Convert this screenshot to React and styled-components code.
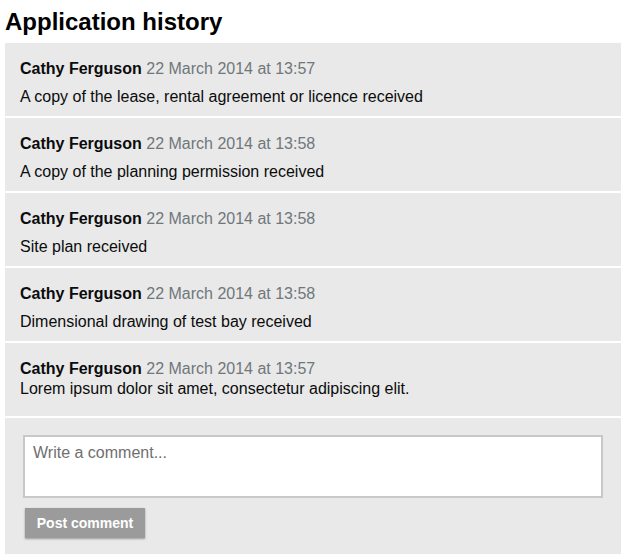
import React from 'react'
import styled, { createGlobalStyle } from 'styled-components'

const GlobalStyle = createGlobalStyle`
  body {
    margin: 0;
    background: #fff;
    font-family: "Liberation Sans", Arial, sans-serif;
    color: #0b0c0c;
  }
`

const entries = [
  { name: 'Cathy Ferguson', date: '22 March 2014 at 13:57', text: 'A copy of the lease, rental agreement or licence received' },
  { name: 'Cathy Ferguson', date: '22 March 2014 at 13:58', text: 'A copy of the planning permission received' },
  { name: 'Cathy Ferguson', date: '22 March 2014 at 13:58', text: 'Site plan received' },
  { name: 'Cathy Ferguson', date: '22 March 2014 at 13:58', text: 'Dimensional drawing of test bay received' },
  { name: 'Cathy Ferguson', date: '22 March 2014 at 13:57', text: 'Lorem ipsum dolor sit amet, consectetur adipiscing elit.', tight: true },
]

const App = () => {
  return (
    <Page>
      <GlobalStyle />
      <Title>Application history</Title>
      <History>
        {entries.map((e, i) => (
          <Entry key={i} $tight={e.tight}>
            <Meta>
              <Author>{e.name}</Author> <Stamp>{e.date}</Stamp>
            </Meta>
            <Note $tight={e.tight}>{e.text}</Note>
          </Entry>
        ))}
        <CommentForm onSubmit={(ev) => ev.preventDefault()}>
          <Comment placeholder="Write a comment..." />
          <Button type="submit">Post comment</Button>
        </CommentForm>
      </History>
    </Page>
  )
}

const Page = styled.div`
  width: 616px;
  padding: 0 5px;
`
const Title = styled.h2`
  margin: 8px 0 7px;
  font-size: 24px;
  line-height: 28px;
  font-weight: bold;
  color: #000;
`
const History = styled.div`
  display: flex;
  flex-direction: column;
`
const Entry = styled.div`
  background: #e9e9e9;
  padding: 16px 15px ${(p) => (p.$tight ? '17px' : '9px')};
  border-bottom: 2px solid #fff;
  font-size: 16px;
  line-height: 20px;
`
const Meta = styled.div``
const Author = styled.strong`
  font-weight: bold;
  color: #0b0c0c;
`
const Stamp = styled.span`
  color: #6f777b;
`
const Note = styled.p`
  margin: ${(p) => (p.$tight ? '0' : '8px 0 0')};
  color: #0b0c0c;
`
const CommentForm = styled.form`
  background: #e9e9e9;
  padding: 17px 18px 16px;
  display: flex;
  flex-direction: column;
  align-items: flex-start;
  gap: 10px;
`
const Comment = styled.textarea`
  box-sizing: border-box;
  width: 580px;
  height: 63px;
  border: 2px solid #c8c8c8;
  background: #fff;
  padding: 6px 8px;
  font-family: "Liberation Sans", Arial, sans-serif;
  font-size: 16px;
  line-height: 20px;
  resize: none;
  outline: none;
  &::placeholder {
    color: #6f6f6f;
  }
`
const Button = styled.button`
  width: 120px;
  height: 30px;
  margin-left: 2px;
  border: none;
  border-radius: 0;
  background: #9b9b9b;
  color: #fff;
  font-family: "Liberation Sans", Arial, sans-serif;
  font-weight: bold;
  font-size: 14px;
  box-shadow: 0 1px 2px rgba(0, 0, 0, 0.35);
  cursor: pointer;
`

export default App
